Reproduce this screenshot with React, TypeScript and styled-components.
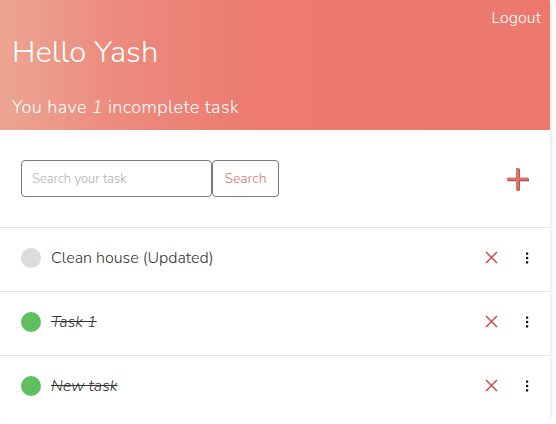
import styled, { createGlobalStyle } from "styled-components";

const GlobalStyle = createGlobalStyle`
  body {
    margin: 0;
    background: #ffffff;
    font-family: "Nunito", "Lato", "Open Sans", sans-serif;
  }
`;

type Task = { id: number; title: string; done: boolean };

const tasks: Task[] = [
  { id: 1, title: "Clean house (Updated)", done: false },
  { id: 2, title: "Task 1", done: true },
  { id: 3, title: "New task", done: true },
];

function CloseIcon() {
  return (
    <svg width="13" height="13" viewBox="0 0 13 13">
      <path d="M1 1 L12 12 M12 1 L1 12" stroke="#c9524f" strokeWidth="1.5" />
    </svg>
  );
}

function KebabIcon() {
  return (
    <svg width="4" height="12" viewBox="0 0 4 12">
      <rect x="1" y="0.5" width="2.2" height="2.2" fill="#111" />
      <rect x="1" y="4.9" width="2.2" height="2.2" fill="#111" />
      <rect x="1" y="9.3" width="2.2" height="2.2" fill="#111" />
    </svg>
  );
}

function PlusIcon() {
  return (
    <svg width="26" height="26" viewBox="0 0 26 26">
      <path d="M3 13 H24 M13.5 2 V24" stroke="#8c3532" strokeWidth="3" transform="translate(0.8 0.8)" />
      <path d="M3 13 H24 M13.5 2 V24" stroke="#e2706a" strokeWidth="3" />
    </svg>
  );
}

export default function App() {
  const incomplete = tasks.filter((t) => !t.done).length;

  return (
    <>
      <GlobalStyle />
      <Card>
        <Header>
          <Logout>Logout</Logout>
          <Greeting>Hello Yash</Greeting>
          <Summary>
            You have <em>{incomplete}</em> incomplete task
          </Summary>
        </Header>
        <Toolbar>
          <SearchForm>
            <SearchInput placeholder="Search your task" />
            <SearchButton>Search</SearchButton>
          </SearchForm>
          <AddButton aria-label="Add task">
            <PlusIcon />
          </AddButton>
        </Toolbar>
        <TaskList>
          {tasks.map((task) => (
            <TaskRow key={task.id}>
              <StatusDot $done={task.done} />
              <TaskTitle $done={task.done}>{task.title}</TaskTitle>
              <IconButton aria-label="Delete">
                <CloseIcon />
              </IconButton>
              <MenuButton aria-label="More">
                <KebabIcon />
              </MenuButton>
            </TaskRow>
          ))}
        </TaskList>
      </Card>
    </>
  );
}

const Card = styled.div`
  width: 550px;
  background: #ffffff;
  box-shadow: 0 2px 6px rgba(0, 0, 0, 0.16);
  border-radius: 0 0 3px 3px;
  overflow: hidden;
`;

const Header = styled.header`
  display: flex;
  flex-direction: column;
  height: 130px;
  box-sizing: border-box;
  padding: 8px 9px 0 12px;
  background: linear-gradient(to right, #eca592 0%, #ec8c7f 20%, #ec7b70 45%, #ec786e 100%);
  color: #ffffff;
  font-weight: 300;
`;

const Logout = styled.a`
  align-self: flex-end;
  font-size: 16px;
  line-height: 20px;
  cursor: pointer;
`;

const Greeting = styled.h1`
  margin: 4px 0 0;
  font-size: 31px;
  font-weight: 300;
  line-height: 40px;
`;

const Summary = styled.p`
  margin: 23px 0 0;
  font-size: 18px;
  line-height: 24px;
  letter-spacing: 0.42px;

  em {
    font-style: italic;
  }
`;

const Toolbar = styled.div`
  display: flex;
  align-items: center;
  justify-content: space-between;
  height: 97px;
  padding: 0 20px 0 21px;
  border-bottom: 1px solid #e3e3e3;
`;

const SearchForm = styled.div`
  display: flex;
`;

const SearchInput = styled.input`
  width: 191px;
  height: 37px;
  box-sizing: border-box;
  padding: 0 10px;
  border: 1px solid #7a7a7a;
  border-radius: 4px;
  font-family: inherit;
  font-size: 13px;
  font-weight: 300;
  outline: none;

  &::placeholder {
    color: #b0b0b0;
  }
`;

const SearchButton = styled.button`
  height: 37px;
  width: 67px;
  padding: 0;
  background: #ffffff;
  border: 1px solid #7a7a7a;
  border-radius: 4px;
  color: #d17773;
  font-family: inherit;
  font-size: 14px;
  font-weight: 300;
  cursor: pointer;
`;

const AddButton = styled.button`
  display: flex;
  padding: 0;
  border: none;
  background: none;
  cursor: pointer;
`;

const TaskList = styled.ul`
  list-style: none;
  margin: 0;
  padding: 0;
`;

const TaskRow = styled.li`
  display: flex;
  align-items: center;
  height: 63px;
  padding: 0 21px 0 21px;
  border-bottom: 1px solid #e3e3e3;

  &:last-child {
    border-bottom: none;
  }
`;

const StatusDot = styled.span<{ $done: boolean }>`
  width: 20px;
  height: 20px;
  margin-top: -3px;
  border-radius: 50%;
  background: ${({ $done }) => ($done ? "#5fbf5f" : "#dcdcdc")};
  flex-shrink: 0;
`;

const TaskTitle = styled.span<{ $done: boolean }>`
  flex: 1;
  margin-left: 10px;
  margin-top: -4px;
  font-size: 16px;
  font-weight: 300;
  color: #333333;
  font-style: ${({ $done }) => ($done ? "italic" : "normal")};
  text-decoration: ${({ $done }) => ($done ? "line-through" : "none")};
`;

const IconButton = styled.button`
  display: flex;
  padding: 0;
  margin-top: -4px;
  border: none;
  background: none;
  cursor: pointer;
`;

const MenuButton = styled(IconButton)`
  margin-left: 27px;
`;
